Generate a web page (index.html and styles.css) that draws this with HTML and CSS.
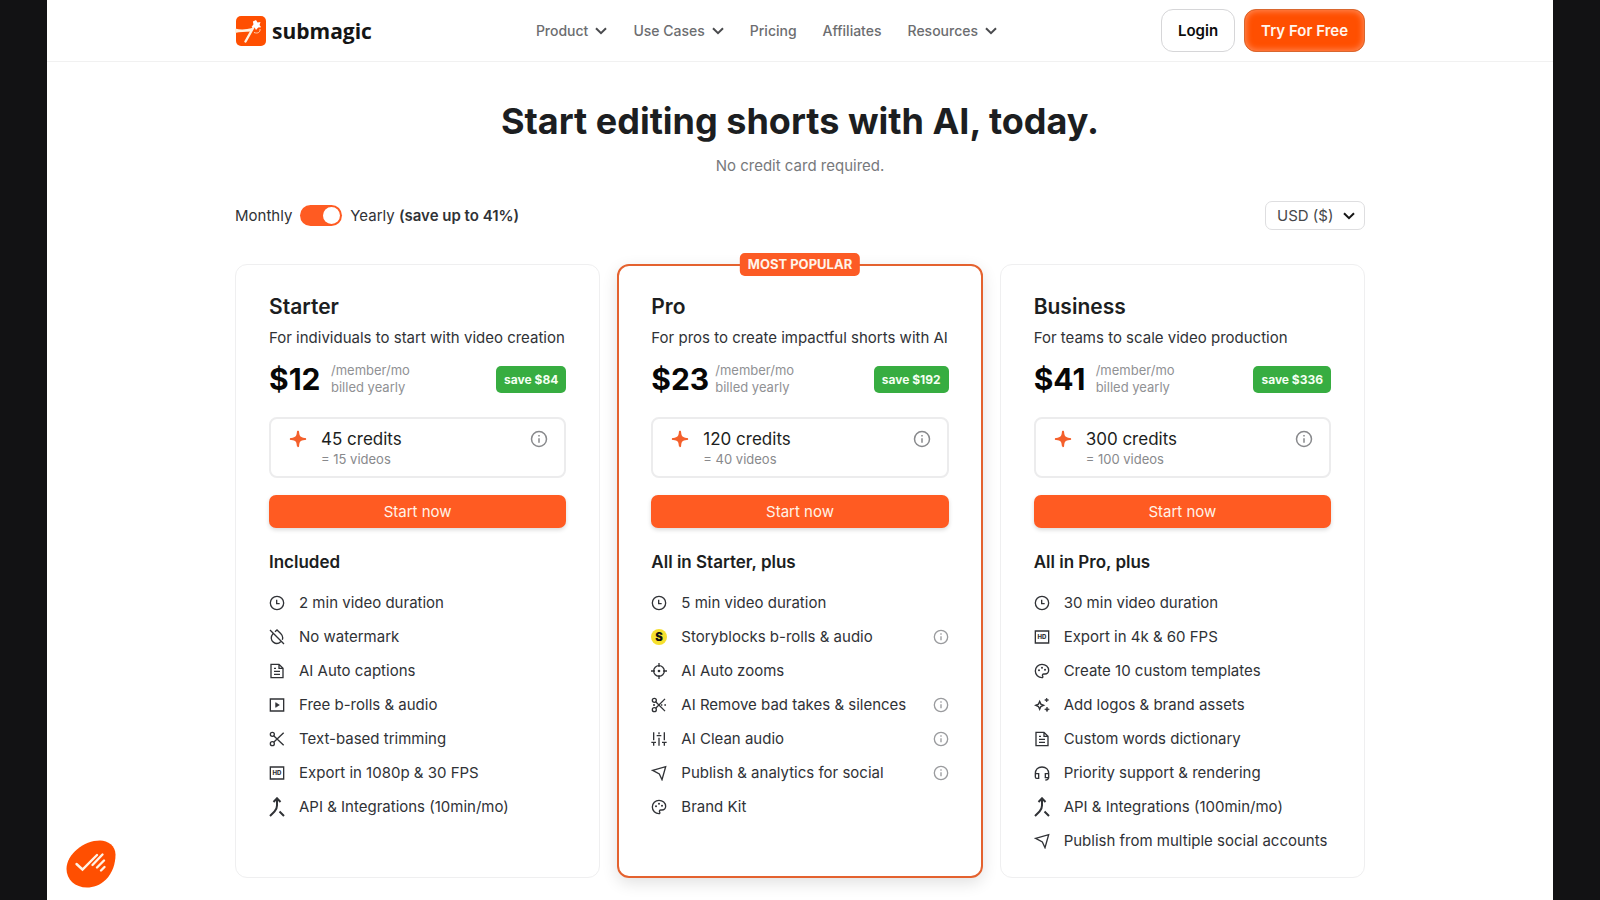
FILE: index.html
```html
<!DOCTYPE html>
<html lang="en">
<head>
    <meta charset="UTF-8">
    <meta name="viewport" content="width=device-width, initial-scale=1.0">
    <title>Submagic Pricing</title>
    <link rel="stylesheet" href="styles.css">
</head>
<body>
    <!-- Icon set -->
    <svg class="icon-set" aria-hidden="true">
        <symbol id="i-chevron" viewBox="0 0 12 8"><path d="M1 1.2l5 5 5-5"/></symbol>
        <symbol id="i-info" viewBox="0 0 24 24"><circle cx="12" cy="12" r="10"/><path d="M12 11v6M12 6.5v2"/></symbol>
        <symbol id="i-clock" viewBox="0 0 24 24"><circle cx="12" cy="12" r="10"/><path d="M11.500 7v6H16"/></symbol>
        <symbol id="i-drop" viewBox="0 0 24 24"><path d="M1.500 1.500l21 21M6 7c-4 5-3 10 .5 12.700 3.500 2.600 8 2.300 11-.7M9 4.200L12 1.500l5.500 5.300c3 3 3.700 6.200 2.500 9.200"/></symbol>
        <symbol id="i-doc" viewBox="0 0 24 24"><path d="M3 2h12l6 6v14H3zM15 2v6h6M7.500 8h3M7.500 12.500h9M7.500 17h9"/></symbol>
        <symbol id="i-play" viewBox="0 0 24 24"><path d="M2 3h20v18H2z"/><path d="M10 8.500l5.500 3.500-5.500 3.500z" fill="currentColor" stroke-width="1"/></symbol>
        <symbol id="i-scissors" viewBox="0 0 24 24"><circle cx="5" cy="5" r="3"/><circle cx="5" cy="19" r="3"/><path d="M7 7.200l15 14.300M7 16.800L22 2.500"/></symbol>
        <symbol id="i-scissors-cut" viewBox="0 0 24 24"><circle cx="5" cy="5" r="3"/><circle cx="5" cy="19" r="3"/><path d="M7 7.200l14 14M7 16.800l14-14M3 12h3M15 12h2M20 12h2.500"/></symbol>
        <symbol id="i-hd" viewBox="0 0 24 24"><path d="M2 3h20v18H2z"/><text x="12" y="15.500" class="hd-text">HD</text></symbol>
        <symbol id="i-merge" viewBox="0 0 16 20"><path d="M4.500 5L8 1.300 11.500 5M8 1.500v7c0 3-1 4.500-2.500 6L1 19M10.500 14.500L15 19"/></symbol>
        <symbol id="i-target" viewBox="0 0 24 24"><circle cx="12" cy="12" r="8"/><path d="M12 0v6M12 18v6M0 12h6M18 12h6"/><circle cx="12" cy="12" r="2" fill="currentColor" stroke="none"/></symbol>
        <symbol id="i-levels" viewBox="0 0 24 24"><path d="M4 2v12M4 18v4M12 2v3M12 10v12M20 2v12M20 18v4M0.500 17h7M8.500 7h7M16.500 17h7"/></symbol>
        <symbol id="i-send" viewBox="0 0 24 24"><path d="M2.500 8L22 2.500 16.500 22l-4-8.500z"/></symbol>
        <symbol id="i-palette" viewBox="0 0 24 24"><path d="M12 2c5.500 0 10 4 10 9 0 3-2.500 5.500-5.500 5.500h-2c-1.600 0-2.500 1.800-1.500 3 .8 1.200 0 2.500-1 2.500C6.500 22 2 17.500 2 12S6.500 2 12 2z"/><circle cx="7.500" cy="11" r="1.500" fill="currentColor" stroke="none"/><circle cx="12" cy="7.200" r="1.500" fill="currentColor" stroke="none"/><circle cx="16.500" cy="10" r="1.500" fill="currentColor" stroke="none"/></symbol>
        <symbol id="i-sparkles" viewBox="0 0 24 24"><path d="M8.500 6.500l1.800 4.200 4.200 1.800-4.200 1.800-1.800 4.200-1.800-4.200-4.200-1.800 4.200-1.800z"/><path d="M19 1.500l.9 2.100 2.100.9-2.100.9L19 7.500l-.9-2.100-2.100-.9 2.100-.9zM19.500 15l1 2.500 2.500 1-2.500 1-1 2.500-1-2.500-2.500-1 2.500-1z" fill="currentColor" stroke-width="1"/></symbol>
        <symbol id="i-headset" viewBox="0 0 24 24"><path d="M2 13c0-6 4-10 10-10s10 4 10 10M2 13h5v7H4c-1.200 0-2-.8-2-2zM22 13h-5v6h5zM22 18c0 3-1.500 4.500-5 4.500"/></symbol>
        <symbol id="i-story" viewBox="0 0 24 24"><circle cx="12" cy="12" r="12" fill="#f6e02f" stroke="none"/><text x="12" y="18" class="story-text">S</text></symbol>
        <symbol id="i-star" viewBox="0 0 18 18"><path d="M9 .8c.8 0 1 .4 1.100 1.200.4 4.200 1 5.300 5.700 5.900 1 .1 1.400.4 1.400 1.100s-.4 1-1.400 1.100c-4.700.6-5.300 1.700-5.700 5.900-.1.800-.3 1.200-1.100 1.200s-1-.4-1.100-1.200c-.4-4.200-1-5.300-5.700-5.900C1.200 10 .8 9.700.8 9s.4-1 1.400-1.100c4.700-.6 5.300-1.700 5.700-5.900C8 1.200 8.200.8 9 .8z" fill="#f4602c" stroke="none"/></symbol>
    </svg>

    <div class="page">
        <!-- Header -->
        <header class="header">
            <div class="container header-inner">
                <a class="logo" href="#">
                    <svg class="logo-mark" viewBox="0 0 32 32" aria-hidden="true">
                        <rect x="1" y="1" width="30" height="30" rx="5" fill="#ff4f01"/>
                        <path d="M0 13.500c6 1.500 11 1 17.500-.5l-1.500 3.500C10 17 5 16.500 0 18z" fill="#fff1e0"/>
                        <path d="M10.500 26.500l9-16" stroke="#fff1e0" stroke-width="2.400" stroke-linecap="round"/>
                        <path d="M21 5l1.500 2.500 3-.5-1 3 1.700 2.300-3 .3L21 15l-1.500-2.700-3-.5 2-2.200-.6-3z" fill="#fff"/>
                        <path d="M19 17.500c4 1.500 6.500-.5 6-3.500" fill="none" stroke="#ffd0b0" stroke-width="1"/>
                    </svg>
                    <span class="logo-text">submagic</span>
                </a>
                <nav class="nav">
                    <a href="#">Product <svg class="chevron"><use href="#i-chevron"/></svg></a>
                    <a href="#">Use Cases <svg class="chevron"><use href="#i-chevron"/></svg></a>
                    <a href="#">Pricing</a>
                    <a href="#">Affiliates</a>
                    <a href="#">Resources <svg class="chevron"><use href="#i-chevron"/></svg></a>
                </nav>
                <div class="header-buttons">
                    <button class="btn-login" type="button">Login</button>
                    <button class="btn-try" type="button">Try For Free</button>
                </div>
            </div>
        </header>

        <!-- Pricing -->
        <main class="container">
            <h1 class="title">Start editing shorts with AI, today.</h1>
            <p class="subtitle">No credit card required.</p>

            <div class="options">
                <label class="billing">
                    <span>Monthly</span>
                    <input class="switch" type="checkbox" role="switch" checked>
                    <span>Yearly <b>(save up to 41%)</b></span>
                </label>
                <div class="currency">
                    <select class="currency-select" aria-label="Currency">
                        <option>USD ($)</option>
                        <option>EUR (€)</option>
                    </select>
                    <svg class="chevron currency-arrow"><use href="#i-chevron"/></svg>
                </div>
            </div>

            <div class="plans">
                <section class="plan">
                    <h2 class="plan-name">Starter</h2>
                    <p class="plan-desc">For individuals to start with video creation</p>
                    <div class="price-row">
                        <span class="price">$12</span>
                        <span class="price-note">/member/mo<br>billed yearly</span>
                        <span class="save">save $84</span>
                    </div>
                    <div class="credits">
                        <svg class="star"><use href="#i-star"/></svg>
                        <div class="credits-text">
                            <div class="credits-count">45 credits</div>
                            <div class="credits-videos">= 15 videos</div>
                        </div>
                        <svg class="info info-large"><use href="#i-info"/></svg>
                    </div>
                    <button class="btn-start" type="button">Start now</button>
                    <h3 class="features-title">Included</h3>
                    <ul class="features">
                        <li><svg class="icon"><use href="#i-clock"/></svg>2 min video duration</li>
                        <li><svg class="icon"><use href="#i-drop"/></svg>No watermark</li>
                        <li><svg class="icon"><use href="#i-doc"/></svg>AI Auto captions</li>
                        <li><svg class="icon"><use href="#i-play"/></svg>Free b-rolls &amp; audio</li>
                        <li><svg class="icon"><use href="#i-scissors"/></svg>Text-based trimming</li>
                        <li><svg class="icon"><use href="#i-hd"/></svg>Export in 1080p &amp; 30 FPS</li>
                        <li><svg class="icon icon-tall"><use href="#i-merge"/></svg>API &amp; Integrations (10min/mo)</li>
                    </ul>
                </section>

                <section class="plan plan-popular">
                    <span class="ribbon">MOST POPULAR</span>
                    <h2 class="plan-name">Pro</h2>
                    <p class="plan-desc">For pros to create impactful shorts with AI</p>
                    <div class="price-row">
                        <span class="price">$23</span>
                        <span class="price-note">/member/mo<br>billed yearly</span>
                        <span class="save">save $192</span>
                    </div>
                    <div class="credits">
                        <svg class="star"><use href="#i-star"/></svg>
                        <div class="credits-text">
                            <div class="credits-count">120 credits</div>
                            <div class="credits-videos">= 40 videos</div>
                        </div>
                        <svg class="info info-large"><use href="#i-info"/></svg>
                    </div>
                    <button class="btn-start" type="button">Start now</button>
                    <h3 class="features-title">All in Starter, plus</h3>
                    <ul class="features">
                        <li><svg class="icon"><use href="#i-clock"/></svg>5 min video duration</li>
                        <li><svg class="icon"><use href="#i-story"/></svg>Storyblocks b-rolls &amp; audio<svg class="info"><use href="#i-info"/></svg></li>
                        <li><svg class="icon"><use href="#i-target"/></svg>AI Auto zooms</li>
                        <li><svg class="icon"><use href="#i-scissors-cut"/></svg>AI Remove bad takes &amp; silences<svg class="info"><use href="#i-info"/></svg></li>
                        <li><svg class="icon"><use href="#i-levels"/></svg>AI Clean audio<svg class="info"><use href="#i-info"/></svg></li>
                        <li><svg class="icon"><use href="#i-send"/></svg>Publish &amp; analytics for social<svg class="info"><use href="#i-info"/></svg></li>
                        <li><svg class="icon"><use href="#i-palette"/></svg>Brand Kit</li>
                    </ul>
                </section>

                <section class="plan">
                    <h2 class="plan-name">Business</h2>
                    <p class="plan-desc">For teams to scale video production</p>
                    <div class="price-row">
                        <span class="price">$41</span>
                        <span class="price-note">/member/mo<br>billed yearly</span>
                        <span class="save">save $336</span>
                    </div>
                    <div class="credits">
                        <svg class="star"><use href="#i-star"/></svg>
                        <div class="credits-text">
                            <div class="credits-count">300 credits</div>
                            <div class="credits-videos">= 100 videos</div>
                        </div>
                        <svg class="info info-large"><use href="#i-info"/></svg>
                    </div>
                    <button class="btn-start" type="button">Start now</button>
                    <h3 class="features-title">All in Pro, plus</h3>
                    <ul class="features">
                        <li><svg class="icon"><use href="#i-clock"/></svg>30 min video duration</li>
                        <li><svg class="icon"><use href="#i-hd"/></svg>Export in 4k &amp; 60 FPS</li>
                        <li><svg class="icon"><use href="#i-palette"/></svg>Create 10 custom templates</li>
                        <li><svg class="icon"><use href="#i-sparkles"/></svg>Add logos &amp; brand assets</li>
                        <li><svg class="icon"><use href="#i-doc"/></svg>Custom words dictionary</li>
                        <li><svg class="icon"><use href="#i-headset"/></svg>Priority support &amp; rendering</li>
                        <li><svg class="icon icon-tall"><use href="#i-merge"/></svg>API &amp; Integrations (100min/mo)</li>
                        <li><svg class="icon"><use href="#i-send"/></svg>Publish from multiple social accounts</li>
                    </ul>
                </section>
            </div>
        </main>
    </div>

    <!-- Cookie preferences -->
    <button class="cookie-btn" type="button" aria-label="Cookie preferences">
        <svg viewBox="0 0 50 48" aria-hidden="true">
            <path d="M34 .5C42 .5 49.500 6 49.500 14.500c0 9-3 18.500-9.500 25C34 45.500 27 47.500 21 47.500 9 47.500.5 39.500.5 29 .5 14 18 .5 34 .5z" fill="#ff4f01"/>
            <path d="M10.500 24l6 5.500L31 15M26.500 25l10-10.500M31 27.500l7-7M35 30.500l3.500-3.500" fill="none" stroke="#fff3e6" stroke-width="2.400" stroke-linecap="round"/>
        </svg>
    </button>
</body>
</html>
```
FILE: styles.css
```css
* {
    margin: 0;
    padding: 0;
    box-sizing: border-box;
}

body {
    background-color: #121214;
    color: #303236;
    font-family: 'Inter', 'Liberation Sans', sans-serif;
    font-size: 15px;
    line-height: 24px;
}

button, select, input {
    font: inherit;
}

a {
    color: inherit;
    text-decoration: none;
}

svg {
    flex-shrink: 0;
    fill: none;
    stroke: currentColor;
    stroke-width: 2;
}

.icon-set {
    display: none;
}

.page {
    min-height: 100vh;
    margin: 0 47px;
    padding-bottom: 22px;
    background-color: #fff;
}

.container {
    max-width: 1130px;
    margin: 0 auto;
}

/* Header */
.header {
    border-bottom: 1px solid #f1f1f1;
}

.header-inner {
    display: flex;
    align-items: center;
    justify-content: space-between;
    height: 61px;
}

.logo {
    display: flex;
    align-items: center;
    gap: 5px;
}

.logo-mark {
    width: 32px;
    height: 32px;
    stroke: none;
}

.logo-text {
    color: #151515;
    font-family: 'Open Sans', sans-serif;
    font-size: 21px;
    font-weight: 700;
}

.nav {
    display: flex;
    gap: 26px;
    color: #6c6d70;
    font-size: 14px;
    font-weight: 500;
}

.nav a {
    display: flex;
    align-items: center;
    gap: 7px;
}

.chevron {
    width: 12px;
    height: 8px;
    color: #4a4b4e;
}

.header-buttons {
    display: flex;
    gap: 9px;
}

.btn-login, .btn-try {
    height: 43px;
    padding: 0 16px;
    border: 1px solid #d6d6d8;
    border-radius: 12px;
    background-color: #fff;
    color: #0c0c0c;
    font-weight: 600;
}

.btn-try {
    border-color: #d9672f;
    background-color: #ff4f01;
    color: #fff6ee;
    box-shadow: inset 0 0 6px 1px #ff8c5a;
}

/* Title */
.title {
    padding-top: 35px;
    color: #1c1e21;
    font-size: 36px;
    font-weight: 700;
    line-height: 48px;
    text-align: center;
}

.subtitle {
    margin-top: 9px;
    color: #77797c;
    text-align: center;
}

/* Billing and currency */
.options {
    display: flex;
    align-items: center;
    justify-content: space-between;
    margin-top: 23px;
}

.billing {
    display: flex;
    align-items: center;
    gap: 8px;
}

.billing b {
    font-weight: 600;
}

.switch {
    appearance: none;
    display: flex;
    justify-content: flex-end;
    width: 42px;
    height: 21px;
    padding: 2px;
    border-radius: 11px;
    background-color: #ff5b22;
}

.switch::before {
    content: '';
    width: 17px;
    height: 17px;
    border-radius: 50%;
    background-color: #fff;
}

.currency {
    position: relative;
}

.currency-select {
    appearance: none;
    height: 29px;
    padding: 0 30px 0 11px;
    border: 1px solid #dedee0;
    border-radius: 7px;
    background-color: #fff;
    color: #46484b;
}

.currency-arrow {
    position: absolute;
    top: 11px;
    right: 10px;
    color: #151515;
}

/* Plans */
.plans {
    display: grid;
    grid-template-columns: repeat(3, 1fr);
    gap: 17px;
    margin-top: 34px;
}

.plan {
    position: relative;
    padding: 28px 33px 19px;
    border: 1px solid #efeff0;
    border-radius: 12px;
}

.plan-popular {
    padding: 27px 32px 18px;
    border: 2px solid #e4622f;
    box-shadow: 0 5px 16px rgba(0, 0, 0, 0.12);
}

.ribbon {
    position: absolute;
    top: -13px;
    left: 50%;
    transform: translateX(-50%);
    padding: 0 8px;
    border-radius: 5px;
    background-color: #fc5b25;
    color: #fff4ea;
    font-size: 13px;
    font-weight: 700;
    line-height: 23px;
    white-space: nowrap;
}

.plan-name {
    color: #1c1e21;
    font-size: 21px;
    font-weight: 600;
    line-height: 28px;
}

.plan-desc {
    margin-top: 5px;
}

.price-row {
    display: flex;
    align-items: center;
    margin-top: 12px;
}

.price {
    min-width: 56px;
    color: #070707;
    font-size: 30px;
    font-weight: 700;
    line-height: 34px;
}

.price-note {
    margin-left: 6px;
    color: #909194;
    font-size: 13px;
    line-height: 17px;
}

.save {
    margin-left: auto;
    padding: 0 8px;
    border-radius: 5px;
    background-color: #37ad41;
    color: #f4fff2;
    font-size: 12px;
    font-weight: 700;
    line-height: 27px;
}

.credits {
    display: flex;
    gap: 14px;
    margin-top: 21px;
    padding: 9px 16px 8px 18px;
    border: 2px solid #ececed;
    border-radius: 8px;
}

.star {
    width: 18px;
    height: 18px;
    margin-top: 2px;
}

.credits-count {
    color: #1c1e21;
    font-size: 17px;
    line-height: 23px;
}

.credits-videos {
    color: #88898c;
    font-size: 13px;
    line-height: 17px;
}

.info {
    width: 16px;
    height: 16px;
    margin-left: auto;
    color: #9a9b9e;
}

.info-large {
    width: 18px;
    height: 18px;
    margin-top: 2px;
    color: #88898c;
}

.btn-start {
    display: block;
    width: 100%;
    height: 33px;
    margin-top: 17px;
    border: none;
    border-radius: 7px;
    background-color: #ff5b22;
    color: #fff3e8;
    box-shadow: 0 2px 4px rgba(0, 0, 0, 0.15);
}

.features-title {
    margin-top: 22px;
    color: #1c1e21;
    font-size: 17px;
    font-weight: 600;
}

.features {
    margin-top: 12px;
    list-style: none;
}

.features li {
    display: flex;
    align-items: center;
    height: 34px;
}

.icon {
    width: 16px;
    height: 16px;
    margin-right: 14px;
}

.icon-tall {
    height: 20px;
}

.hd-text, .story-text {
    fill: currentColor;
    stroke: none;
    font-size: 9px;
    font-weight: 800;
    text-anchor: middle;
}

.story-text {
    fill: #111;
    font-size: 17px;
    font-weight: 900;
}

/* Cookie button */
.cookie-btn {
    position: fixed;
    left: 66px;
    bottom: 12px;
    width: 50px;
    height: 48px;
    border: none;
    background: none;
}

.cookie-btn svg {
    display: block;
    stroke: none;
}
```
